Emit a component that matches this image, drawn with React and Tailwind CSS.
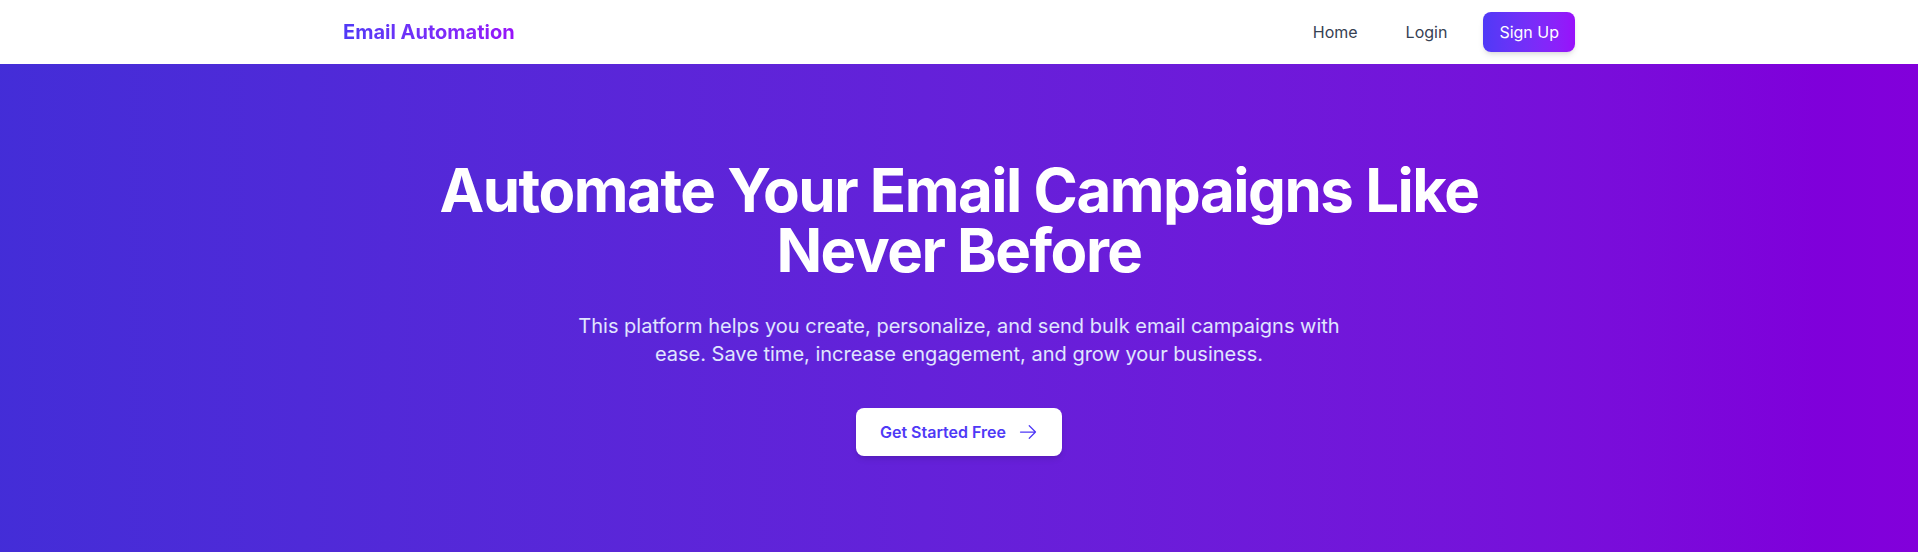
import React from 'react';

// Navbar
const Navbar = () => {
  return (
    <nav className="bg-white h-16">
      <div className="max-w-7xl mx-auto px-6 h-full flex items-center justify-between">
        <a href="#" className="text-xl font-bold bg-linear-to-r from-indigo-600 to-purple-600 bg-clip-text text-transparent">
          Email Automation
        </a>
        <div className="flex items-center gap-6">
          <a href="#" className="px-3 py-2 text-base text-gray-700">Home</a>
          <a href="#" className="px-3 py-2 text-base text-gray-700">Login</a>
          <a href="#" className="px-4 py-2 text-base text-white rounded-lg shadow-md bg-linear-to-r from-indigo-600 to-purple-600">
            Sign Up
          </a>
        </div>
      </div>
    </nav>
  );
};

const ArrowRight = () => (
  <svg className="w-5 h-5 ml-3" viewBox="0 0 24 24" fill="none" stroke="currentColor" strokeWidth="1.5">
    <path strokeLinecap="round" strokeLinejoin="round" d="M13.5 4.5 21 12m0 0-7.5 7.5M21 12H3" />
  </svg>
);

// Hero section
const Hero = () => {
  return (
    <section className="bg-linear-to-r from-indigo-700 to-purple-700 py-24 px-6 text-center">
      <h1 className="max-w-6xl mx-auto text-6xl leading-none font-bold tracking-tight text-white mb-8">
        Automate Your Email Campaigns Like Never Before
      </h1>
      <p className="max-w-3xl mx-auto text-xl text-indigo-100 mb-10">
        This platform helps you create, personalize, and send bulk email campaigns with ease. Save time, increase engagement, and grow your business.
      </p>
      <a href="#" className="inline-flex items-center px-6 py-3 bg-white text-indigo-600 text-base font-semibold rounded-lg shadow-md">
        Get Started Free
        <ArrowRight />
      </a>
    </section>
  );
};

function App() {
  return (
    <div className="min-h-screen font-['Inter',sans-serif]">
      <Navbar />
      <Hero />
    </div>
  );
}

export default App;
